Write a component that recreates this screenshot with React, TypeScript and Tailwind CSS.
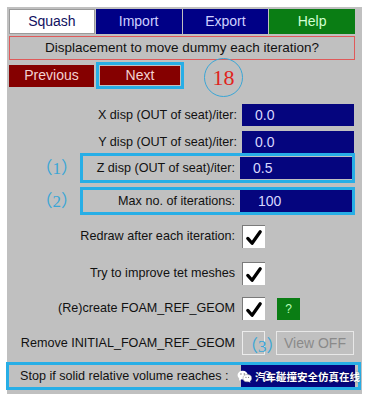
import { FC, ReactElement, ReactNode } from "react";

const Check: FC = (): ReactElement => (
    <svg viewBox="0 0 23 23" className="w-[23px] h-[23px]">
        <path d="M5 12.5 L9.5 17.5 L18 5.5" fill="none" stroke="#000" strokeWidth="3.4" strokeLinecap="round" strokeLinejoin="round" />
    </svg>
);

const CheckBox: FC<{ checked?: boolean }> = ({ checked }): ReactElement =>
    checked ? (
        <div className="w-[23px] h-[23px] bg-white border-l border-t border-[#7a7a7a] flex items-center justify-center">
            <Check />
        </div>
    ) : (
        <div className="w-[23px] h-[24px] border border-[#ececec]" />
    );

const Field: FC<{ value: string; pad?: string }> = ({ value, pad = "pl-[13px]" }): ReactElement => (
    <div className={`w-[112px] h-[22px] bg-[#05057e] text-[#d8d8ff] text-[14px] leading-[22px] ${pad}`}>{value}</div>
);

const Note: FC<{ children: ReactNode }> = ({ children }): ReactElement => (
    <span className="text-[#3aa6d6] text-[17px] leading-none" style={{ fontFamily: '"Liberation Serif", "Noto Sans CJK SC", serif' }}>
        {children}
    </span>
);

export default function App(): ReactElement {
    return (
        <div className="w-[365px] h-[404px] bg-white pt-[7px] pl-[7px] overflow-hidden" style={{ fontFamily: '"Liberation Sans", Arial, sans-serif' }}>
            <div className="relative w-[355px] bg-[#c0c0c0] pl-[2px] pr-[7px] pt-[2px] pb-[4px] text-[12.6px] text-[#111]">
                {/* tabs */}
                <div className="grid grid-cols-4 gap-px h-[25px] text-[14px]">
                    <div className="bg-white border border-[#9a9a9a] text-[#101060] flex items-center justify-center">Squash</div>
                    <div className="bg-[#000086] text-[#cfd0ff] flex items-center justify-center">Import</div>
                    <div className="bg-[#000086] text-[#cfd0ff] flex items-center justify-center">Export</div>
                    <div className="bg-[#0a7d14] text-[#d2ffd2] flex items-center justify-center">Help</div>
                </div>

                <div className="mt-[2px] h-[24px] border border-[#e05a5a] flex items-center justify-center text-[13.5px]">
                    Displacement to move dummy each iteration?
                </div>

                {/* nav buttons */}
                <div className="mt-[2px] h-[27px] flex items-center gap-[2px] text-[14px]">
                    <div className="w-[85px] h-[22px] bg-[#850000] text-[#f2d2d2] flex items-center justify-center">Previous</div>
                    <div className="w-[88px] h-[27px] border-[3px] border-[#27aee6] p-px">
                        <div className="w-full h-full bg-[#850000] text-[#f2d2d2] flex items-center justify-center">Next</div>
                    </div>
                </div>
                <div className="absolute left-[197px] top-[51px] w-[39px] h-[39px] rounded-full border-[1.5px] border-[#3aa6d6] flex items-center justify-center">
                    <span className="text-[#e0241c] text-[22px] leading-none" style={{ fontFamily: '"Liberation Serif", serif' }}>18</span>
                </div>

                {/* disp rows */}
                <div className="mt-[15px] flex items-center h-[22px]">
                    <div className="w-[228px] text-right">X disp (OUT of seat)/iter:</div>
                    <div className="ml-[5px]"><Field value="0.0" /></div>
                </div>
                <div className="mt-[5px] flex items-center h-[22px]">
                    <div className="w-[228px] text-right">Y disp (OUT of seat)/iter:</div>
                    <div className="ml-[5px]"><Field value="0.0" /></div>
                </div>
                <div className="flex items-center h-[30px]">
                    <div className="w-[73px] flex justify-end pr-[2px]"><Note>（1）</Note></div>
                    <div className="w-[276px] h-[30px] border-[3px] border-[#27aee6] flex items-center">
                        <div className="w-[152px] text-right">Z disp (OUT of seat)/iter:</div>
                        <div className="ml-[5px]"><Field value="0.5" /></div>
                    </div>
                </div>
                <div className="mt-[4px] flex items-center h-[28px]">
                    <div className="w-[73px] flex justify-end pr-[2px]"><Note>（2）</Note></div>
                    <div className="w-[276px] h-[28px] border-[3px] border-[#27aee6] flex items-center">
                        <div className="w-[152px] text-right">Max no. of iterations:</div>
                        <div className="ml-[5px]"><Field value="100" pad="pl-[18px]" /></div>
                    </div>
                </div>

                {/* toggles */}
                <div className="mt-[10px] flex items-center h-[23px]">
                    <div className="w-[226px] text-right">Redraw after each iteration:</div>
                    <div className="ml-[7px]"><CheckBox checked /></div>
                </div>
                <div className="mt-[14px] flex items-center h-[23px]">
                    <div className="w-[226px] text-right">Try to improve tet meshes</div>
                    <div className="ml-[7px]"><CheckBox checked /></div>
                </div>
                <div className="mt-[12px] flex items-center h-[23px]">
                    <div className="w-[226px] text-right">(Re)create FOAM_REF_GEOM</div>
                    <div className="ml-[7px]"><CheckBox checked /></div>
                    <div className="ml-[12px] w-[23px] h-[22px] bg-[#0a7d14] text-[#b8ffb8] text-[12px] flex items-center justify-center">?</div>
                </div>
                <div className="mt-[11px] flex items-center h-[24px]">
                    <div className="w-[226px] text-right">Remove INITIAL_FOAM_REF_GEOM</div>
                    <div className="ml-[7px]"><CheckBox /></div>
                    <div className="ml-[11px] w-[78px] h-[24px] border border-[#e8e8e8] text-[#8a8a8a] text-[14px] flex items-center justify-center">View OFF</div>
                </div>
                <div className="absolute left-[234px] top-[331px]"><Note>（3）</Note></div>

                {/* stop row */}
                <div className="mt-[7px] -ml-[3px] w-[355px] h-[28px] border-[3px] border-[#27aee6] flex items-center">
                    <div className="flex-1 pl-[11px] whitespace-nowrap">Stop if solid relative volume reaches :</div>
                    <div className="mr-[3px] w-[114px] h-[22px] bg-[#05057e] text-[#d8d8ff] text-[14px] leading-[22px] pl-[22px]">0.1</div>
                </div>
                <div className="absolute left-[230px] top-[362px] flex items-center gap-[3px] whitespace-nowrap text-white text-[10.5px] font-bold [text-shadow:0_0_2px_rgba(0,0,0,0.5)]" style={{ fontFamily: '"Noto Sans CJK SC", sans-serif' }}>
                    <svg viewBox="0 0 16 14" className="w-[15px] h-[13px] shrink-0">
                        <ellipse cx="6" cy="5.5" rx="5.5" ry="4.6" fill="#fff" />
                        <path d="M2.5 9 L2 11.5 L5 9.8 Z" fill="#fff" />
                        <ellipse cx="11" cy="8.8" rx="4.6" ry="3.9" fill="#fff" stroke="#9a9a9a" strokeWidth="0.6" />
                        <path d="M13.5 11.8 L14.5 13.6 L11.8 12.4 Z" fill="#fff" />
                        <circle cx="4.2" cy="4.3" r="0.8" fill="#777" />
                        <circle cx="7.8" cy="4.3" r="0.8" fill="#777" />
                        <circle cx="9.6" cy="8" r="0.6" fill="#777" />
                        <circle cx="12.4" cy="8" r="0.6" fill="#777" />
                    </svg>
                    <span>汽车碰撞安全仿真在线</span>
                </div>
            </div>
        </div>
    );
}
